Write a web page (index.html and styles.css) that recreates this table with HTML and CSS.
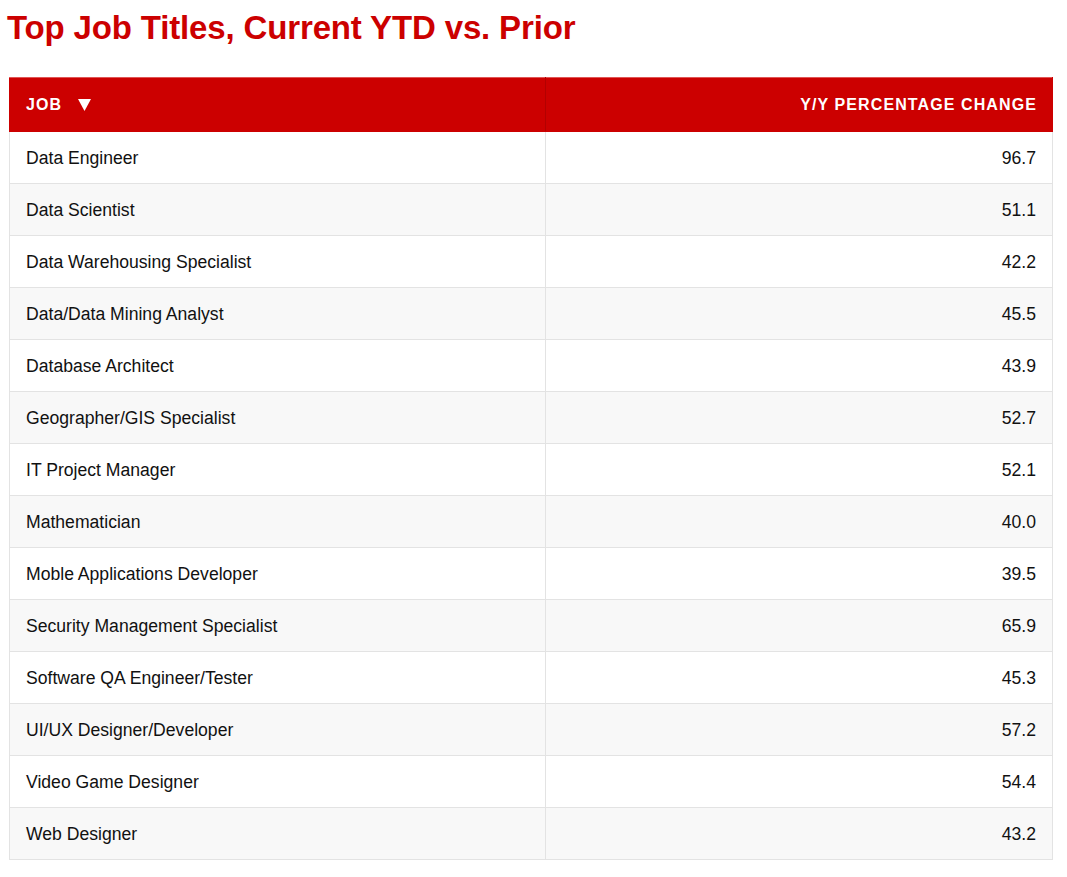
FILE: index.html
```html
<!DOCTYPE html>
<html lang="en">
<head>
<meta charset="utf-8">
<title>Top Job Titles</title>
<link rel="stylesheet" href="styles.css">
</head>
<body>
<h1 class="title">Top Job Titles, Current YTD vs. Prior</h1>
<table class="jobs">
  <thead>
    <tr>
      <th class="col-job"><span class="th-inner">JOB<svg class="sort" width="13" height="12" viewBox="0 0 13 12"><polygon points="0,0 13,0 6.5,12" fill="#ffffff"/></svg></span></th>
      <th class="col-num">Y/Y PERCENTAGE CHANGE</th>
    </tr>
  </thead>
  <tbody>
    <tr><td>Data Engineer</td><td class="num">96.7</td></tr>
    <tr><td>Data Scientist</td><td class="num">51.1</td></tr>
    <tr><td>Data Warehousing Specialist</td><td class="num">42.2</td></tr>
    <tr><td>Data/Data Mining Analyst</td><td class="num">45.5</td></tr>
    <tr><td>Database Architect</td><td class="num">43.9</td></tr>
    <tr><td>Geographer/GIS Specialist</td><td class="num">52.7</td></tr>
    <tr><td>IT Project Manager</td><td class="num">52.1</td></tr>
    <tr><td>Mathematician</td><td class="num">40.0</td></tr>
    <tr><td>Moble Applications Developer</td><td class="num">39.5</td></tr>
    <tr><td>Security Management Specialist</td><td class="num">65.9</td></tr>
    <tr><td>Software QA Engineer/Tester</td><td class="num">45.3</td></tr>
    <tr><td>UI/UX Designer/Developer</td><td class="num">57.2</td></tr>
    <tr><td>Video Game Designer</td><td class="num">54.4</td></tr>
    <tr><td>Web Designer</td><td class="num">43.2</td></tr>
  </tbody>
</table>
</body>
</html>
```
FILE: styles.css
```css
html, body {
  margin: 0;
  padding: 0;
  background: #ffffff;
}
body {
  font-family: "Liberation Sans", Arial, Helvetica, sans-serif;
  padding: 0 14px 0 9px;
}
.title {
  margin: 0;
  padding-top: 8px;
  margin-left: -2px;
  font-size: 33px;
  line-height: 40px;
  font-weight: bold;
  color: #cc0000;
  letter-spacing: -0.15px;
}
.jobs {
  margin-top: 29px;
  width: 1044px;
  border-collapse: collapse;
  font-size: 17.6px;
  color: #111111;
}
.jobs th {
  background: #cc0000;
  color: #ffffff;
  font-weight: bold;
  font-size: 16px;
  letter-spacing: 1.1px;
  height: 54px;
  padding: 0 16px;
  box-sizing: border-box;
  border: 1px solid #cc0000;
  border-top-color: #e05555;
  text-align: left;
}
.jobs th.col-job {
  width: 536px;
  border-right: 1px solid #b30000;
}
.jobs th.col-num {
  text-align: right;
  padding-right: 15px;
}
.th-inner {
  display: inline-flex;
  align-items: center;
}
.sort {
  margin-left: 16px;
  margin-top: 1px;
}
.jobs td {
  height: 52px;
  box-sizing: border-box;
  padding: 2px 16px 0 16px;
  border: 1px solid #e3e3e3;
}
.jobs tbody tr:nth-child(even) td {
  background: #f8f8f8;
}
.jobs td.num {
  text-align: right;
}
```
